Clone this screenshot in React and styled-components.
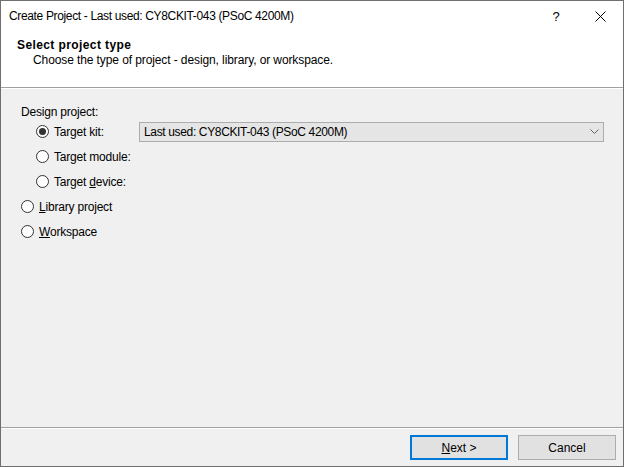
import React from 'react';
import styled, { createGlobalStyle } from 'styled-components';

const GlobalStyle = createGlobalStyle`
  html, body {
    margin: 0;
    padding: 0;
    background: #fff;
  }
  body {
    font-family: "Liberation Sans", Arial, sans-serif;
    font-size: 12px;
    color: #000;
  }
`;

const Window = styled.div`
  width: 624px;
  height: 467px;
  box-sizing: border-box;
  border: 1px solid #6f6f6f;
  background: #f0f0f0;
  display: flex;
  flex-direction: column;
`;

const TitleBar = styled.div`
  height: 30px;
  background: #fff;
  display: flex;
  align-items: center;
  padding-left: 8px;
`;

const TitleText = styled.div`
  flex: 1;
  font-size: 12px;
  letter-spacing: -0.35px;
`;

const TitleButton = styled.div`
  width: 46px;
  height: 30px;
  box-sizing: border-box;
  padding-left: ${p => (p.help ? '4px' : '0')};
  display: flex;
  align-items: center;
  justify-content: center;
  font-size: 13px;
`;

const Header = styled.div`
  height: 57px;
  background: #fff;
  border-bottom: 1px solid #a0a0a0;
  box-shadow: 0 1px 0 #fff;
  padding: 7px 0 0 16px;
  box-sizing: border-box;
`;

const HeaderTitle = styled.div`
  font-weight: bold;
  line-height: 15px;
  letter-spacing: 0.4px;
`;

const HeaderSub = styled.div`
  padding-left: 16px;
  line-height: 15px;
  letter-spacing: -0.1px;
`;

const Content = styled.div`
  flex: 1;
  padding: 17px 19px 0 20px;
  letter-spacing: -0.2px;
`;

const GroupLabel = styled.div`
  line-height: 14px;
`;

const Row = styled.div`
  height: 25px;
  display: flex;
  align-items: center;
  margin-left: ${p => (p.indent ? '15px' : '0')};
`;

const Radio = styled.span`
  width: 13px;
  height: 13px;
  box-sizing: border-box;
  border-radius: 50%;
  border: 1px solid #333;
  background: #fff;
  display: inline-flex;
  align-items: center;
  justify-content: center;
  margin-right: 5px;
  flex-shrink: 0;

  &::after {
    content: '';
    width: 7px;
    height: 7px;
    border-radius: 50%;
    background: ${p => (p.checked ? '#333' : 'transparent')};
  }
`;

const RadioLabel = styled.span`
  width: ${p => (p.width ? p.width + 'px' : 'auto')};
  white-space: nowrap;
`;

const Select = styled.div`
  flex: 1;
  height: 20px;
  box-sizing: border-box;
  border: 1px solid #adadad;
  background: #e5e5e5;
  display: flex;
  align-items: center;
  padding: 0 4px;
  letter-spacing: -0.35px;
`;

const SelectText = styled.span`
  flex: 1;
`;

const Footer = styled.div`
  height: 39px;
  box-sizing: border-box;
  border-top: 1px solid #a0a0a0;
  box-shadow: inset 0 1px 0 #fff;
  display: flex;
  justify-content: flex-end;
  align-items: center;
  gap: 10px;
  padding: 1px 7px 0 0;
`;

const Button = styled.div`
  width: 98px;
  height: 25px;
  box-sizing: border-box;
  background: #e1e1e1;
  border: ${p => (p.primary ? '2px solid #0078d7' : '1px solid #adadad')};
  display: flex;
  align-items: center;
  justify-content: center;
`;

const U = styled.span`
  text-decoration: underline;
`;

const Chevron = () => (
  <svg width="9" height="5" viewBox="0 0 9 5">
    <path d="M0.5 0.5 L4.5 4.5 L8.5 0.5" fill="none" stroke="#606060" strokeWidth="1" />
  </svg>
);

const CloseIcon = () => (
  <svg width="11" height="11" viewBox="0 0 11 11">
    <path d="M0.5 0.5 L10.5 10.5 M10.5 0.5 L0.5 10.5" fill="none" stroke="#000" strokeWidth="1" />
  </svg>
);

export default function App() {
  return (
    <>
      <GlobalStyle />
      <Window>
        <TitleBar>
          <TitleText>Create Project - Last used: CY8CKIT-043 (PSoC 4200M)</TitleText>
          <TitleButton help>?</TitleButton>
          <TitleButton><CloseIcon /></TitleButton>
        </TitleBar>
        <Header>
          <HeaderTitle>Select project type</HeaderTitle>
          <HeaderSub>Choose the type of project - design, library, or workspace.</HeaderSub>
        </Header>
        <Content>
          <GroupLabel>Design project:</GroupLabel>
          <Row indent>
            <Radio checked />
            <RadioLabel width={85}>Target kit:</RadioLabel>
            <Select>
              <SelectText>Last used: CY8CKIT-043 (PSoC 4200M)</SelectText>
              <Chevron />
            </Select>
          </Row>
          <Row indent>
            <Radio />
            <RadioLabel>Target module:</RadioLabel>
          </Row>
          <Row indent>
            <Radio />
            <RadioLabel>Target <U>d</U>evice:</RadioLabel>
          </Row>
          <Row>
            <Radio />
            <RadioLabel><U>L</U>ibrary project</RadioLabel>
          </Row>
          <Row>
            <Radio />
            <RadioLabel><U>W</U>orkspace</RadioLabel>
          </Row>
        </Content>
        <Footer>
          <Button primary><span><U>N</U>ext &gt;</span></Button>
          <Button>Cancel</Button>
        </Footer>
      </Window>
    </>
  );
}
